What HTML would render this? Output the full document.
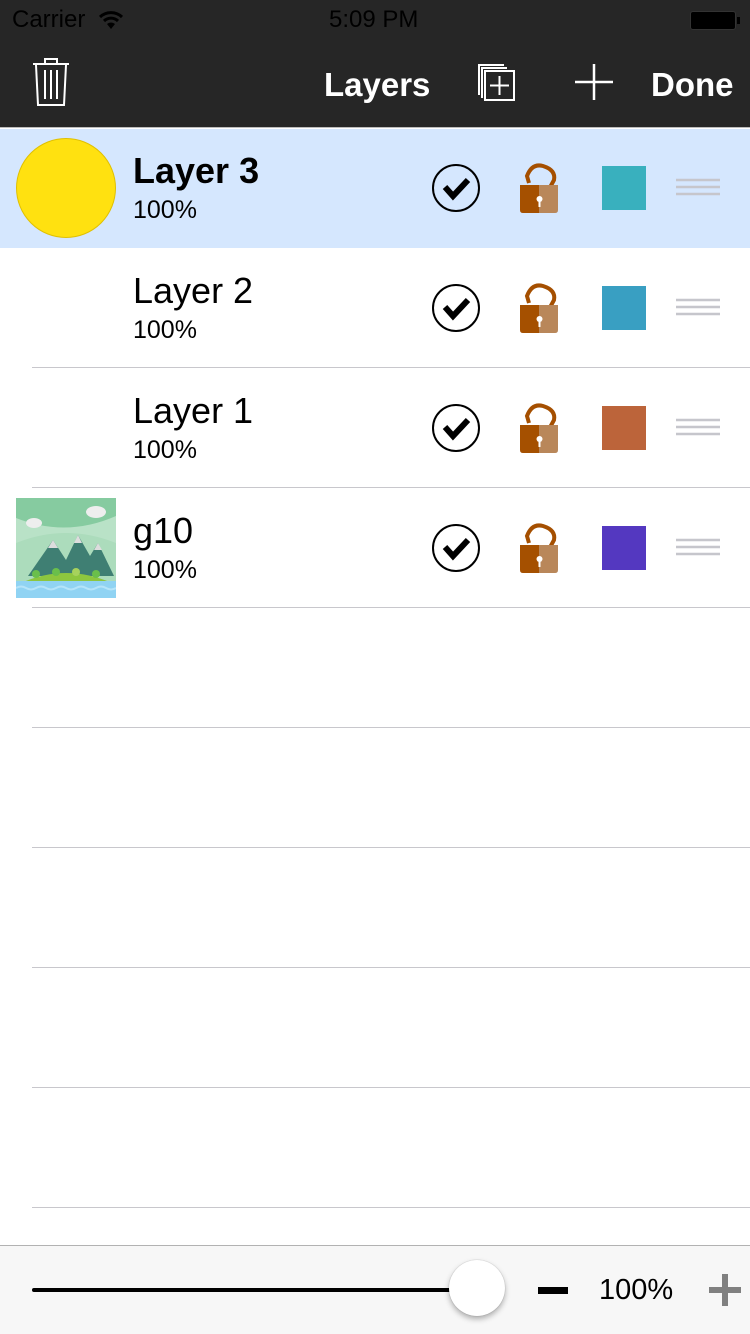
<!DOCTYPE html>
<html><head><meta charset="utf-8"><style>
*{margin:0;padding:0;box-sizing:border-box}
body{width:750px;height:1334px;background:#fff;font-family:"Liberation Sans",sans-serif;position:relative;overflow:hidden}
.hdr{position:absolute;left:0;top:0;width:750px;height:128px;background:#262626;border-bottom:1px solid #bbb}
.st{position:absolute;top:6px;font-size:24px;color:#000}
.nav{position:absolute;top:66px;font-size:33px;color:#fff;font-weight:bold}
.row{position:absolute;left:0;width:750px;height:120px}
.sep{position:absolute;left:32px;right:0;height:1px;background:#c8c7cc}
.name{position:absolute;left:133px;top:22px;font-size:36px;color:#000}
.pct{position:absolute;left:133px;top:68px;font-size:25px;color:#000}
.sq{position:absolute;left:602px;top:38px;width:44px;height:44px}
.ic{position:absolute;left:0;top:0}
</style></head><body>
<div class="hdr">
<div class="st" style="left:12px">Carrier</div>
<svg class="ic" style="left:98px;top:10px" width="26" height="20" viewBox="0 0 26 20"><path d="M2 7 A16 16 0 0 1 24 7" stroke="#000" stroke-width="3" fill="none"/><path d="M6 11 A10 10 0 0 1 20 11" stroke="#000" stroke-width="3" fill="none"/><path d="M13 19 L9 14 A6 6 0 0 1 17 14Z" fill="#000"/></svg>
<div class="st" style="left:329px">5:09 PM</div>
<div style="position:absolute;left:690px;top:11px;width:46px;height:19px;background:#000;border-radius:3px;border:1px solid #333"></div>
<div style="position:absolute;left:737px;top:17px;width:3px;height:7px;background:#000"></div>
<svg class="ic" style="left:30px;top:56px" width="42" height="52" viewBox="0 0 42 52"><g stroke="#fff" stroke-width="2" fill="none"><path d="M15 8 V3 H27 V8"/><path d="M3 8 H39"/><path d="M6 9 L8 49 H34 L36 9"/><path d="M15 14 V43 M21 14 V43 M27 14 V43"/></g></svg>
<div class="nav" style="left:324px">Layers</div>
<svg class="ic" style="left:476px;top:62px" width="40" height="40" viewBox="0 0 40 40"><g stroke="#fff" stroke-width="2" fill="none"><path d="M3 33 V3 H28"/><path d="M6 36 V6 H31"/><rect x="9" y="9" width="29" height="29"/><path d="M23.5 14 V33 M14 23.5 H33"/></g></svg>
<svg class="ic" style="left:575px;top:64px" width="38" height="36" viewBox="0 0 38 36"><path d="M19 0 V36 M0 18 H38" stroke="#fff" stroke-width="2.5"/></svg>
<div class="nav" style="left:651px">Done</div>
</div>

<div class="row" style="top:129px;height:119px;background:#d5e7fe"></div>
<div style="position:absolute;left:16px;top:138px;width:100px;height:100px;border-radius:50%;background:#ffe110;border:1px solid #e0c000"></div>

<div class="sep" style="top:367px"></div><div class="sep" style="top:487px"></div><div class="sep" style="top:607px"></div><div class="sep" style="top:727px"></div><div class="sep" style="top:847px"></div><div class="sep" style="top:967px"></div><div class="sep" style="top:1087px"></div><div class="sep" style="top:1207px"></div>

<svg class="ic" style="left:16px;top:498px" width="100" height="100" viewBox="0 0 100 100"><rect width="100" height="100" fill="#b9e2c7"/><path d="M0 0 H100 V18 Q50 40 0 20Z" fill="#86cba0"/><path d="M0 45 Q50 25 100 45 V100 H0Z" fill="#acdcbc"/><ellipse cx="80" cy="14" rx="10" ry="6" fill="#eee"/><ellipse cx="18" cy="25" rx="8" ry="5" fill="#eee"/><path d="M12 78 L37 42 L50 62 L62 37 L74 58 L82 45 L98 78Z" fill="#3f7f73"/><path d="M32 50 L37 42 L42 50Z M58 45 L62 37 L66 45Z M78 52 L82 45 L86 52Z" fill="#ddd"/><path d="M5 85 Q50 65 96 85Z" fill="#8dc63f"/><circle cx="20" cy="76" r="4" fill="#6abf4b"/><circle cx="40" cy="74" r="4" fill="#6abf4b"/><circle cx="60" cy="74" r="4" fill="#a6d25c"/><circle cx="80" cy="76" r="4" fill="#6abf4b"/><rect y="83" width="100" height="17" fill="#90d3f3"/><path d="M0 90 Q5 87 10 90 T20 90 T30 90 T40 90 T50 90 T60 90 T70 90 T80 90 T90 90 T100 90" stroke="#b5e4f9" stroke-width="2" fill="none"/></svg>

<div class="row" style="top:128px"><div class="name" style="font-weight:bold">Layer 3</div><div class="pct">100%</div><div class="sq" style="background:#39b0be"></div></div>
<div class="row" style="top:248px"><div class="name">Layer 2</div><div class="pct">100%</div><div class="sq" style="background:#399fc2"></div></div>
<div class="row" style="top:368px"><div class="name">Layer 1</div><div class="pct">100%</div><div class="sq" style="background:#bc643a"></div></div>
<div class="row" style="top:488px"><div class="name">g10</div><div class="pct">100%</div><div class="sq" style="background:#5438c0"></div></div>

<svg class="ic" width="750" height="610" style="top:0">
<defs><g id="ico">
<circle cx="456" cy="188" r="23" fill="none" stroke="#000" stroke-width="2"/>
<path d="M445 187 L453 196 L468 180" stroke="#000" stroke-width="6" fill="none" stroke-linejoin="miter"/>
<path d="M529 183 L527 176 Q532 163 543 166 Q556 170 554 180 L548 191" stroke="#a54f00" stroke-width="4" fill="none"/>
<path d="M520 185 H539 V213 H523 Q520 213 520 210Z" fill="#a55000"/>
<path d="M539 185 H558 V210 Q558 213 555 213 H539Z" fill="#b9875a"/>
<circle cx="539.5" cy="199" r="3" fill="#fff"/><rect x="538.5" y="200" width="2" height="7" fill="#fff"/>
<path d="M676 180 H720 M676 187 H720 M676 194 H720" stroke="#c6c6cc" stroke-width="2.5"/>
</g></defs>
<use href="#ico"/><use href="#ico" y="120"/><use href="#ico" y="240"/><use href="#ico" y="360"/>
</svg>

<div style="position:absolute;left:0;top:1245px;width:750px;height:89px;background:#f7f7f7;border-top:1px solid #b2b2b2"></div>
<div style="position:absolute;left:32px;top:1288px;width:440px;height:4px;background:#000;border-radius:2px"></div>
<div style="position:absolute;left:449px;top:1260px;width:56px;height:56px;border-radius:50%;background:#fff;box-shadow:0 3px 6px rgba(0,0,0,.3),0 0 1px rgba(0,0,0,.3)"></div>
<div style="position:absolute;left:538px;top:1287px;width:30px;height:7px;background:#000"></div>
<div style="position:absolute;left:599px;top:1274px;font-size:29px;color:#000">100%</div>
<div style="position:absolute;left:709px;top:1287px;width:32px;height:6px;background:#808080"></div>
<div style="position:absolute;left:722px;top:1274px;width:6px;height:32px;background:#808080"></div>
</body></html>
